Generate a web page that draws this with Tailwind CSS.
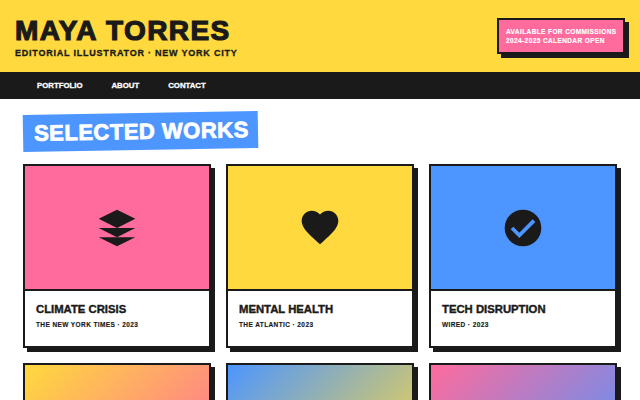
<!DOCTYPE html>
<html lang="en">
<head>
  <meta charset="UTF-8">
  <title>Maya Torres</title>
  <script src="https://cdn.jsdelivr.net/npm/@tailwindcss/browser@4"></script>
</head>
<body class="bg-white font-['Liberation_Sans',sans-serif] overflow-hidden h-[400px]">
  <header class="h-[73px] bg-[#ffd93d] border-b border-[#1a1a1a] pl-[15px] pr-[15px] flex items-center justify-between">
    <div class="pt-[2px]">
      <h1 class="text-[28px] leading-[32px] font-black text-[#1a1a1a] tracking-[1.4px] [-webkit-text-stroke:1.2px_#1a1a1a]">MAYA TORRES</h1>
      <p class="text-[9px] leading-[12px] font-bold tracking-[0.78px] text-[#1a1a1a] [-webkit-text-stroke:0.3px_#1a1a1a]">EDITORIAL ILLUSTRATOR · NEW YORK CITY</p>
    </div>
    <div class="w-[128px] h-[36px] bg-[#ff6b9d] border-2 border-[#1a1a1a] shadow-[4px_4px_0_#1a1a1a] pl-[7px] pt-[7px] text-white text-[6.5px] leading-[9px] font-bold tracking-[0.4px] [-webkit-text-stroke:0.15px_#fff]">
      AVAILABLE FOR COMMISSIONS<br>2024-2025 CALENDAR OPEN
    </div>
  </header>

  <nav class="h-[26px] bg-[#1a1a1a] pl-[37px] flex items-center gap-[29px] text-white text-[7.8px] font-bold [-webkit-text-stroke:0.3px_#fff]">
    <a>PORTFOLIO</a>
    <a>ABOUT</a>
    <a>CONTACT</a>
  </nav>

  <main class="px-[23px] pt-[14px]">
    <h2 class="w-[235px] whitespace-nowrap bg-[#4d96ff] text-white text-[22px] leading-[27px] font-black tracking-[0.5px] [-webkit-text-stroke:0.8px_#fff] px-[11px] py-[5px] -rotate-1">SELECTED WORKS</h2>

    <div class="grid grid-cols-3 gap-[15px] mt-[14px]">
      <article class="h-[184px] border-2 border-[#1a1a1a] shadow-[4px_4px_0_#1a1a1a] bg-white">
        <div class="h-[125px] bg-[#ff6b9d] border-b-2 border-[#1a1a1a] flex items-center justify-center">
          <svg class="w-11 h-11 text-[#1a1a1a]" viewBox="0 0 24 24" fill="currentColor"><path d="M12 2 2 7l10 5 10-5-10-5Z"/><path d="M2 12l10 5 10-5Z"/><path d="M2 17l10 5 10-5Z"/></svg>
        </div>
        <div class="px-[11px] pt-[10px]">
          <h3 class="text-[11.3px] leading-[16px] font-black text-[#1a1a1a] [-webkit-text-stroke:0.4px_#1a1a1a]">CLIMATE CRISIS</h3>
          <p class="text-[6.5px] leading-[9px] mt-[3px] font-bold tracking-[0.4px] text-[#1a1a1a] [-webkit-text-stroke:0.15px_#1a1a1a]">THE NEW YORK TIMES · 2023</p>
        </div>
      </article>
      <article class="h-[184px] border-2 border-[#1a1a1a] shadow-[4px_4px_0_#1a1a1a] bg-white">
        <div class="h-[125px] bg-[#ffd93d] border-b-2 border-[#1a1a1a] flex items-center justify-center">
          <svg class="w-11 h-11 text-[#1a1a1a]" viewBox="0 0 24 24" fill="currentColor"><path d="M12 20.9l-1.45-1.32C5.4 14.91 2 11.83 2 8.05 2 4.97 4.42 2.55 7.5 2.55c1.74 0 3.41.81 4.5 2.09 1.09-1.28 2.76-2.09 4.5-2.09 3.08 0 5.5 2.42 5.5 5.5 0 3.78-3.4 6.86-8.55 11.54L12 20.9Z"/></svg>
        </div>
        <div class="px-[11px] pt-[10px]">
          <h3 class="text-[11.3px] leading-[16px] font-black text-[#1a1a1a] [-webkit-text-stroke:0.4px_#1a1a1a]">MENTAL HEALTH</h3>
          <p class="text-[6.5px] leading-[9px] mt-[3px] font-bold tracking-[0.4px] text-[#1a1a1a] [-webkit-text-stroke:0.15px_#1a1a1a]">THE ATLANTIC · 2023</p>
        </div>
      </article>
      <article class="h-[184px] border-2 border-[#1a1a1a] shadow-[4px_4px_0_#1a1a1a] bg-white">
        <div class="h-[125px] bg-[#4d96ff] border-b-2 border-[#1a1a1a] flex items-center justify-center">
          <svg class="w-11 h-11" viewBox="0 0 24 24"><circle cx="12" cy="12" r="10" fill="#1a1a1a"/><path d="M6 12l4 4 8-8" fill="none" stroke="#4d96ff" stroke-width="2"/></svg>
        </div>
        <div class="px-[11px] pt-[10px]">
          <h3 class="text-[11.3px] leading-[16px] font-black text-[#1a1a1a] [-webkit-text-stroke:0.4px_#1a1a1a]">TECH DISRUPTION</h3>
          <p class="text-[6.5px] leading-[9px] mt-[3px] font-bold tracking-[0.4px] text-[#1a1a1a] [-webkit-text-stroke:0.15px_#1a1a1a]">WIRED · 2023</p>
        </div>
      </article>
      <article class="h-[184px] border-2 border-[#1a1a1a] shadow-[4px_4px_0_#1a1a1a] bg-white">
        <div class="h-[125px] bg-[linear-gradient(135deg,#ffd93d,#ff6b9d)] border-b-2 border-[#1a1a1a]"></div>
      </article>
      <article class="h-[184px] border-2 border-[#1a1a1a] shadow-[4px_4px_0_#1a1a1a] bg-white">
        <div class="h-[125px] bg-[linear-gradient(135deg,#4d96ff,#ffd93d)] border-b-2 border-[#1a1a1a]"></div>
      </article>
      <article class="h-[184px] border-2 border-[#1a1a1a] shadow-[4px_4px_0_#1a1a1a] bg-white">
        <div class="h-[125px] bg-[linear-gradient(135deg,#ff6b9d,#4d96ff)] border-b-2 border-[#1a1a1a]"></div>
      </article>
    </div>
  </main>
</body>
</html>
